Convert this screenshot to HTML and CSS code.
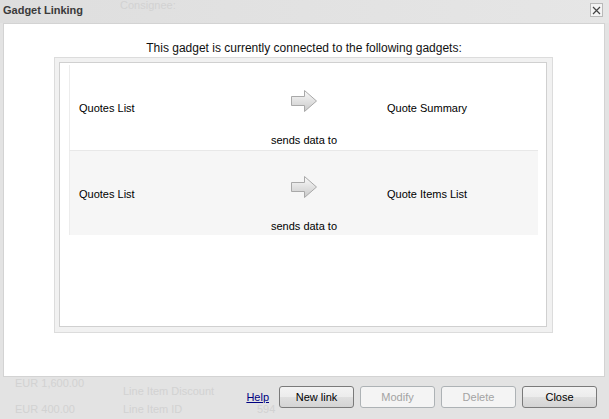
FILE: index.html
```html
<!DOCTYPE html>
<html>
<head>
  <meta charset="UTF-8">
  <title>Gadget Linking</title>
  <link rel="stylesheet" href="styles.css">
</head>
<body>
  <div class="dialog">
    <div class="titlebar">
      <span class="title">Gadget Linking</span>
      <span class="ghost ghost-top">Consignee:</span>
      <button class="x-btn" title="Close">
        <svg width="9" height="9" viewBox="0 0 9 9"><path d="M1 1 L8 8 M8 1 L1 8" stroke="#444" stroke-width="1.2" fill="none"/></svg>
      </button>
    </div>

    <div class="panel">
      <p class="intro">This gadget is currently connected to the following gadgets:</p>
      <div class="frame">
        <div class="frame-inner">
          <div class="link">
            <div class="src">Quotes List</div>
            <div class="arrow">
              <svg width="28" height="24" viewBox="0 0 28 24">
                <defs>
                  <linearGradient id="ag1" x1="0" y1="0" x2="0" y2="1">
                    <stop offset="0" stop-color="#fafafa"/>
                    <stop offset="1" stop-color="#c9c9c9"/>
                  </linearGradient>
                </defs>
                <path d="M1.5 7.5 H14.5 V1.5 L26.5 12 L14.5 22.5 V16.5 H1.5 Z" fill="url(#ag1)" stroke="#a9a9a9"/>
              </svg>
            </div>
            <div class="dst">Quote Summary</div>
            <div class="verb">sends data to</div>
          </div>
          <div class="link alt">
            <div class="src">Quotes List</div>
            <div class="arrow">
              <svg width="28" height="24" viewBox="0 0 28 24">
                <defs>
                  <linearGradient id="ag2" x1="0" y1="0" x2="0" y2="1">
                    <stop offset="0" stop-color="#fafafa"/>
                    <stop offset="1" stop-color="#c9c9c9"/>
                  </linearGradient>
                </defs>
                <path d="M1.5 7.5 H14.5 V1.5 L26.5 12 L14.5 22.5 V16.5 H1.5 Z" fill="url(#ag2)" stroke="#a9a9a9"/>
              </svg>
            </div>
            <div class="dst">Quote Items List</div>
            <div class="verb">sends data to</div>
          </div>
        </div>
      </div>
    </div>

    <div class="footer">
      <div class="ghost-area">
        <div class="ghost-col first">
          <span class="ghost">EUR 1,600.00</span>
          <span class="ghost">EUR 400.00</span>
        </div>
        <div class="ghost-col second">
          <span class="ghost">Line Item Discount</span>
          <span class="ghost">Line Item ID</span>
        </div>
        <div class="ghost-col third">
          <span class="ghost">&nbsp;</span>
          <span class="ghost">594</span>
        </div>
      </div>
      <a class="help" href="#">Help</a>
      <button class="btn">New link</button>
      <button class="btn" disabled>Modify</button>
      <button class="btn" disabled>Delete</button>
      <button class="btn">Close</button>
    </div>
  </div>
</body>
</html>
```

FILE: styles.css
```css
/* page */
body {
  margin: 0;
  background: #e3e3e3;
  font-family: "Liberation Sans", Arial, sans-serif;
  color: #000;
}
.dialog {
  width: 609px;
  height: 419px;
  display: flex;
  flex-direction: column;
}

/* title bar */
.titlebar {
  height: 23px;
  display: flex;
  align-items: flex-start;
  padding-left: 3px;
  background: linear-gradient(to right, #dedede, #e6e6e6);
}
.title {
  font-weight: bold;
  font-size: 11px;
  line-height: 20px;
  color: #3a3a3a;
}
.ghost {
  color: #d2d2d2;
  font-size: 11px;
  white-space: nowrap;
}
.ghost-top {
  margin: 1px 0 0 37px;
  line-height: 9px;
}
.x-btn {
  margin: 3px 6px 0 auto;
  width: 13px;
  height: 14px;
  padding: 0;
  border: 1px solid #b9b9b9;
  background: #f4f4f4;
  display: flex;
  align-items: center;
  justify-content: center;
}

/* white panel */
.panel {
  margin: 0 4px 0 3px;
  height: 354px;
  box-sizing: border-box;
  border: 1px solid #d3d3d3;
  background: #fff;
}
.intro {
  margin: 0;
  padding-top: 17px;
  font-size: 12px;
  line-height: 14px;
  text-align: center;
  color: #111;
}
.frame {
  margin: 2px 0 0 50px;
  width: 499px;
  height: 276px;
  box-sizing: border-box;
  border: 1px solid #dcdcdc;
  background: #f1f1f1;
  padding: 4px 5px 5px 4px;
}
.frame-inner {
  height: 100%;
  box-sizing: border-box;
  border: 1px solid #d0d0d0;
  background: #fff;
  padding: 2px 8px 0 9px;
}

/* link rows */
.link {
  height: 85px;
  box-sizing: border-box;
  display: grid;
  grid-template-columns: 156px 156px 156px;
  grid-template-rows: 60px 25px;
  font-size: 11px;
  border-left: 1px solid #ececec;
}
.link.alt {
  background: #f6f6f6;
  border-top: 1px solid #e8e8e8;
}
.src, .dst {
  align-self: end;
  padding-bottom: 10px;
  line-height: 14px;
}
.src {
  padding-left: 9px;
}
.dst {
  padding-left: 5px;
}
.arrow {
  align-self: end;
  justify-self: center;
  margin-bottom: 12px;
  height: 24px;
}
.verb {
  grid-column: 1 / 4;
  text-align: center;
  line-height: 14px;
  padding-top: 8px;
}

/* footer */
.footer {
  flex: 1;
  display: flex;
  align-items: flex-start;
  padding: 9px 12px 0 0;
}
.ghost-area {
  flex: none;
  display: flex;
  margin: -9px -20px 0 0;
}
.ghost-col {
  display: flex;
  flex-direction: column;
  line-height: 13px;
}
.ghost-col.first {
  width: 123px;
  padding-left: 15px;
  box-sizing: border-box;
  gap: 13px;
}
.ghost-col.second {
  padding-top: 8px;
  gap: 5px;
  width: 134px;
}
.ghost-col.third {
  padding-top: 8px;
  gap: 5px;
  width: 0;
}
.help {
  margin-left: auto;
  margin-right: 10px;
  font-size: 11px;
  color: #000080;
  line-height: 22px;
}
.btn {
  flex: none;
  width: 75px;
  height: 22px;
  margin-left: 6px;
  box-sizing: border-box;
  border: 1px solid #7a7a7a;
  border-radius: 3px;
  background: linear-gradient(#f3f3f3, #ececec 50%, #dfdfdf 51%, #d4d4d4);
  font-family: "Liberation Sans", Arial, sans-serif;
  font-size: 11px;
  color: #000;
  padding: 0;
}
.help + .btn {
  margin-left: 0;
}
.btn:disabled {
  border-color: #adb2b5;
  background: #f4f4f4;
  color: #a3a3a3;
}
```
